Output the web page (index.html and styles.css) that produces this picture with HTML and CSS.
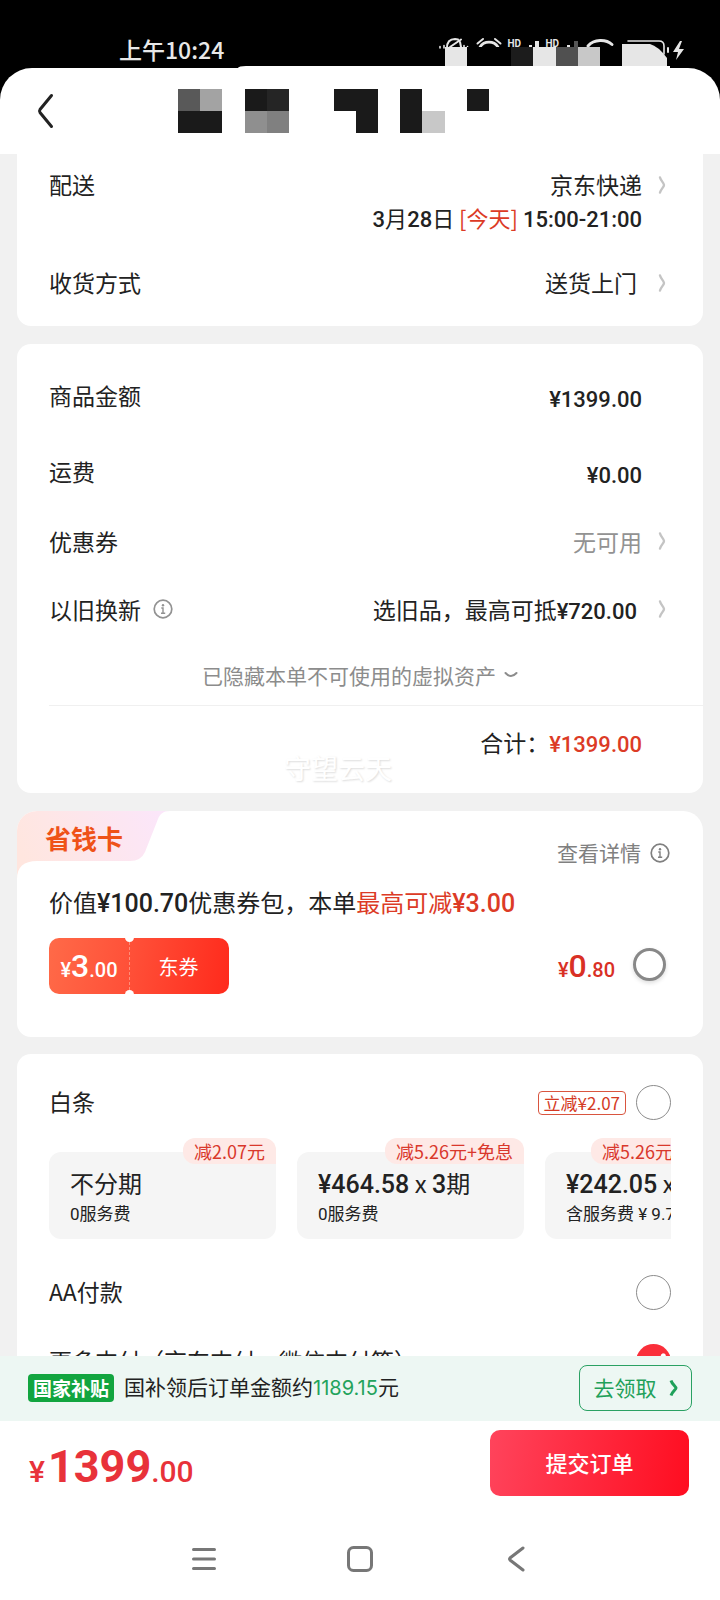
FILE: index.html
```html
<!DOCTYPE html>
<html lang="zh-CN">
<head>
<meta charset="utf-8">
<meta name="viewport" content="width=device-width, initial-scale=1">
<title>确认订单</title>
<link rel="stylesheet" href="styles.css">
</head>
<body>
<svg class="defs" aria-hidden="true">
  <symbol id="chev" viewBox="0 0 8 18"><path d="M2 1.500C3 5 6 7 6 9S3 13 2 16.500" fill="none" stroke="currentColor" stroke-width="2.400" stroke-linecap="round"/></symbol>
  <symbol id="info" viewBox="0 0 20 20"><circle cx="10" cy="10" r="8.800" fill="none" stroke="currentColor" stroke-width="1.700"/><circle cx="10" cy="6.200" r="1.200" fill="currentColor"/><path d="M8.300 9H10V14M8 14.200H12.200" fill="none" stroke="currentColor" stroke-width="1.400"/></symbol>
</svg>
<div class="app">
  <div class="status">
    <span class="time">上午10:24</span>
    <svg class="status-icons" width="255" height="32" viewBox="437 36 255 32" aria-hidden="true">
      <g fill="none" stroke="#e6e6e6" stroke-width="2" stroke-linecap="round">
        <path d="M447 48C447 41 451 39 455 39L458 39.500M450 47L461 39.500M460 42L461 47"/>
        <path d="M440 46.500V48M444 45.500V48M464 45.500V48M467.500 46.500V48" stroke-width="1.600"/>
        <path d="M477.500 43.500L483 39M495 39L500.500 43.500"/>
        <path d="M480 47C484 40.500 494 40.500 498 47" stroke-width="2.600"/>
        <path d="M588 46C594 39 606 39 612 44.500" stroke-width="3"/>
        <path d="M628 41H659Q664 41 664 46V54" stroke-width="1.600"/>
        <path d="M668 48V52"/>
      </g>
      <g fill="#e6e6e6">
        <path d="M529 45H532V48H529ZM535 41H539V48H535ZM567 45H570V48H567ZM680 41L673 52H678L676 60L684 49H679L682 41Z"/>
        <path d="M574 41H578V48H574Z" fill="#555"/>
        <text class="hd" x="507.500" y="47">HD</text>
        <text class="hd" x="545.500" y="47">HD</text>
        <path d="M445 47H467V68H445Z"/>
        <path d="M533 47H556V68H533Z"/>
        <path d="M622 44H650Q658 46 667 58V68H622Z"/>
      </g>
      <path d="M467 47H511V68H467Z" fill="#000"/>
      <path d="M511 47H533V68H511Z" fill="#1c1c1c"/>
      <path d="M556 47H578V68H556Z" fill="#505050"/>
      <path d="M578 47H600V68H578Z" fill="#c8c8c8"/>
      <path d="M600 47H622V68H600Z" fill="#000"/>
    </svg>
  </div>

  <div class="sheet">
    <header class="head">
      <button class="back" type="button" aria-label="返回"><svg width="18" height="36" viewBox="0 0 18 36"><path d="M14.500 2.500L3 16.500Q2 18 3 19.500L14.500 33.500" fill="none" stroke="#222" stroke-width="3" stroke-linecap="round"/></svg></button>
      <svg class="mosaic" width="311" height="44" viewBox="178 89 311 44" shape-rendering="crispEdges" aria-hidden="true">
        <path d="M178 111H222V133H178ZM245 89H289V111H245ZM334 89H378V133H356V111H334ZM400 89H422V133H400ZM467 89H489V111H467Z" fill="#1a1a1a"/>
        <path d="M178 89H200V111H178Z" fill="#595959"/>
        <path d="M200 89H222V111H200Z" fill="#a3a3a3"/>
        <path d="M267 89H289V111H267Z" fill="#252525"/>
        <path d="M245 111H267V133H245Z" fill="#8f8f8f"/>
        <path d="M267 111H289V133H267Z" fill="#808080"/>
        <path d="M422 111H445V133H422Z" fill="#c8c8c8"/>
      </svg>
    </header>

    <main class="content">
      <section class="card delivery">
        <div class="row row-top">
          <span>配送</span>
          <div class="value"><div>京东快递</div><div class="date"><b>3</b>月<b>28</b>日 <span class="red">[今天]</span> <b>15:00-21:00</b></div></div>
          <svg class="chev" width="8" height="18"><use href="#chev"/></svg>
        </div>
        <div class="row row-top">
          <span>收货方式</span>
          <div class="value inset">送货上门</div>
          <svg class="chev" width="8" height="18"><use href="#chev"/></svg>
        </div>
      </section>

      <section class="card amounts">
        <div class="row row-tall"><span>商品金额</span><span class="value"><b>¥1399.00</b></span><span class="chev"></span></div>
        <div class="row row-tall"><span>运费</span><span class="value"><b>¥0.00</b></span><span class="chev"></span></div>
        <div class="row row-coupon"><span>优惠券</span><span class="value muted">无可用</span><svg class="chev" width="8" height="18"><use href="#chev"/></svg></div>
        <div class="row row-trade"><span class="with-icon">以旧换新 <svg class="info" width="20" height="20"><use href="#info"/></svg></span><span class="value inset">选旧品，最高可抵<b>¥720.00</b></span><svg class="chev" width="8" height="18"><use href="#chev"/></svg></div>
        <button class="hidden-assets" type="button">已隐藏本单不可使用的虚拟资产 <svg width="14" height="8" viewBox="0 0 14 8"><path d="M1.500 2Q7 8 12.500 2" fill="none" stroke="#8c8c8c" stroke-width="2" stroke-linecap="round"/></svg></button>
        <div class="row total"><span class="value">合计：<b class="red">¥1399.00</b></span><span class="chev"></span></div>
        <span class="watermark">守望云天</span>
      </section>

      <section class="card saver">
        <svg class="saver-bg" width="153" height="68" viewBox="0 0 153 68" aria-hidden="true">
          <defs><linearGradient id="pk" x1="0" y1="0.500" x2="1" y2="0.300"><stop offset="0" stop-color="#ffe6df"/><stop offset="0.500" stop-color="#fde6ec"/><stop offset="1" stop-color="#fbe6fa"/></linearGradient></defs>
          <path d="M0 68V0H153C146 0 143 3 141 8L128 41Q124 50 113 50H20Q0 50 0 68Z" fill="url(#pk)"/>
        </svg>
        <div class="saver-head">
          <h2>省钱卡</h2>
          <a class="detail" href="#detail">查看详情 <svg width="20" height="20"><use href="#info"/></svg></a>
        </div>
        <p class="saver-desc">价值<b>¥100.70</b>优惠券包，本单<span class="red">最高可减<b>¥3.00</b></span></p>
        <div class="saver-buy">
          <div class="ticket"><span class="ticket-amt">¥<b>3</b>.00</span><span class="ticket-name">东券</span></div>
          <label class="saver-pick"><span class="saver-price">¥<b>0</b>.80</span><input class="radio thick" type="checkbox"></label>
        </div>
      </section>

      <section class="card pay">
        <label class="row pay-row"><span class="pay-name">白条</span><span class="off">立减¥2.07</span><input class="radio" type="radio" name="pay"></label>
        <div class="plans">
          <button class="plan" type="button"><span class="plan-tag">减2.07元</span><span class="plan-title">不分期</span><span class="plan-sub">0服务费</span></button>
          <button class="plan" type="button"><span class="plan-tag">减5.26元+免息</span><span class="plan-title"><b>¥464.58</b> x <b>3</b>期</span><span class="plan-sub">0服务费</span></button>
          <button class="plan" type="button"><span class="plan-tag plan-tag-wide">减5.26元</span><span class="plan-title"><b>¥242.05</b> x <b>6</b>期</span><span class="plan-sub">含服务费 ¥ 9.72</span></button>
        </div>
        <label class="row pay-row"><span class="pay-name">AA付款</span><input class="radio push" type="radio" name="pay"></label>
        <label class="row pay-row"><span class="pay-name">更多支付（京东支付、微信支付等）</span><input class="radio push" type="radio" name="pay" checked></label>
      </section>
    </main>

    <footer>
      <div class="subsidy">
        <span class="gov">国家补贴</span>
        <span class="gov-text">国补领后订单金额约<span class="gov-num">1189.15</span>元</span>
        <button class="claim" type="button">去领取 <svg width="9" height="18" viewBox="0 0 9 18"><path d="M2 1.500C3 5 7 7.500 7 9S3 13 2 16.500" fill="none" stroke="#1fa15a" stroke-width="3"/></svg></button>
      </div>
      <div class="checkout">
        <span class="sum">¥<b>1399</b>.00</span>
        <button class="submit" type="button">提交订单</button>
      </div>
      <nav class="sysnav" aria-label="系统导航">
        <button type="button" aria-label="菜单"><svg width="26" height="26" viewBox="0 0 26 26"><path d="M2.500 3.500H23.500M2.500 13H23.500M2.500 22.500H23.500"/></svg></button>
        <button type="button" aria-label="主页"><svg width="26" height="26" viewBox="0 0 26 26"><rect x="1.500" y="1.500" width="23" height="23" rx="5"/></svg></button>
        <button type="button" aria-label="后退"><svg width="26" height="26" viewBox="0 0 26 26"><path d="M20 2L7 12Q6 13 7 14L20 24"/></svg></button>
      </nav>
    </footer>
  </div>
</div>
</body>
</html>
```
FILE: styles.css
```css
* { box-sizing: border-box; }

body {
  margin: 0;
  background: #000;
  color: #222;
  font: 400 23px/33px "Noto Sans CJK SC", sans-serif;
}

button {
  margin: 0;
  padding: 0;
  border: 0;
  background: none;
  color: inherit;
  font: inherit;
}

/* Amounts and times */
b {
  font-family: Roboto, sans-serif;
  font-weight: 500;
  line-height: 1;
}

svg { display: block; }
.defs { position: absolute; width: 0; height: 0; }

.app {
  display: flex;
  flex-direction: column;
  height: 100vh;
}

.status {
  display: flex;
  justify-content: space-between;
  height: 68px;
  padding: 33px 28px 0 119px;
  color: #e8e8e8;
}
.time { font-weight: 500; }
.status-icons { margin-top: 3px; }
.hd { font: 700 10px Roboto, sans-serif; }

.sheet {
  position: relative;
  display: flex;
  flex: 1;
  flex-direction: column;
  min-height: 0;
  border-radius: 32px 32px 0 0;
  background: #fff;
}
.sheet::before {
  content: "";
  position: absolute;
  top: -2px;
  left: 33%;
  right: 7%;
  height: 4px;
  border-top-left-radius: 8px 2px;
  background: #fff;
}

.head {
  display: flex;
  align-items: center;
  gap: 123px;
  height: 86px;
  padding-left: 37px;
}

.content {
  display: flex;
  flex: 1;
  flex-direction: column;
  gap: 18px;
  min-height: 0;
  overflow: hidden;
  padding: 0 17px;
  background: #f1f1f1;
}

.card {
  position: relative;
  flex: none;
  padding: 0 32px;
  border-radius: 14px;
  background: #fff;
}

.row {
  display: flex;
  align-items: center;
}
.value {
  margin-left: auto;
  text-align: right;
}
.inset { padding-right: 5px; }
.red { color: #dc3b26; }
.muted { color: #929292; }
.chev {
  flex: none;
  width: 8px;
  margin-left: 16px;
  margin-right: 5px;
  color: #c4c4c4;
}

.delivery {
  display: flex;
  flex-direction: column;
  gap: 32px;
  padding-top: 14px;
  padding-bottom: 27px;
  border-radius: 0 0 14px 14px;
}
.row-top { align-items: flex-start; }
.row-top .chev { margin-top: 8px; }
.date { font-size: 22px; }

.amounts b { font-size: 22px; }
.amounts { padding-top: 13px; padding-bottom: 15px; }
.row-tall { height: 76px; }
.row-tall .value { padding-top: 4px; }
.row-coupon { height: 64px; }
.row-trade { height: 72px; }
.with-icon,
.detail {
  display: flex;
  align-items: center;
  gap: 12px;
}
.info { color: #929292; }
.hidden-assets {
  display: flex;
  align-items: center;
  justify-content: center;
  gap: 8px;
  width: 100%;
  height: 60px;
  color: #8c8c8c;
  font-size: 21px;
}
.total {
  height: 73px;
  margin-right: -32px;
  padding-right: 32px;
  border-top: 1px solid #f0f0f0;
}
.watermark {
  position: absolute;
  right: 311px;
  bottom: 9px;
  color: #fff;
  font-size: 27px;
  text-shadow: 1px 1px 2px #ddd;
}

.saver {
  overflow: hidden;
  padding-bottom: 43px;
  border-radius: 20px 20px 14px 14px;
}
.saver-bg {
  position: absolute;
  top: 0;
  left: 0;
}
.saver-head {
  position: relative;
  display: flex;
  justify-content: space-between;
  height: 68px;
  margin-left: -4px;
}
h2 {
  margin: 10px 0 0;
  color: #ef5218;
  font-size: 26px;
  font-weight: 700;
  line-height: 33px;
}
.detail {
  gap: 9px;
  height: 33px;
  margin: 25px 1px 0 0;
  color: #808080;
  font-size: 21px;
  text-decoration: none;
}
.saver-desc {
  margin: 0;
  font-size: 24px;
  line-height: 46px;
}
.saver-desc b { font-size: 25px; }
.saver-buy {
  display: flex;
  align-items: center;
  justify-content: space-between;
  margin-top: 13px;
}
.ticket {
  position: relative;
  display: flex;
  align-items: center;
  width: 180px;
  height: 56px;
  border-radius: 10px;
  background: linear-gradient(100deg, #ff6a48, #ff5038 45%, #ff2a1c);
  color: #fff;
}
.ticket::before,
.ticket::after {
  content: "";
  position: absolute;
  left: 76px;
  width: 9px;
  height: 9px;
  border-radius: 50%;
  background: #fff;
}
.ticket::before { top: -5px; }
.ticket::after { bottom: -5px; }
.ticket-amt {
  width: 81px;
  border-right: 1px dashed #ff8d78;
  text-align: center;
}
.ticket-amt,
.saver-price {
  padding-top: 8px;
  font-family: Roboto, sans-serif;
  font-size: 20px;
  font-weight: 500;
  line-height: 40px;
}
.ticket-amt b,
.saver-price b { font-size: 32px; }
.ticket-name {
  flex: 1;
  padding-right: 2px;
  font-size: 20px;
  text-align: center;
}
.saver-pick {
  display: flex;
  align-items: center;
  gap: 18px;
  padding-right: 5px;
  color: #d93025;
}

.radio {
  flex: none;
  appearance: none;
  width: 35px;
  height: 35px;
  margin: 0;
  border: 1px solid #8c8c8c;
  border-radius: 50%;
  background: #fff;
}
.radio:checked { border: 0; background: radial-gradient(circle at 78% 34%, #fff 0 2px, #fa2f3a 3px); }
.thick {
  width: 33px;
  height: 33px;
  margin-bottom: 4px;
  border: 3px solid #888;
  box-shadow: 0 2px 4px #ddd;
}
.push { margin-left: auto; }

.pay { margin-top: -1px; padding-top: 14px; }
.pay-row { height: 69px; }
.pay-name { padding-bottom: 2px; }
.off {
  margin: 0 10px 0 auto;
  padding: 0 5px;
  border: 1px solid #d9553f;
  border-radius: 4px;
  color: #d43a24;
  font-size: 17px;
  line-height: 22px;
}
.plans {
  display: flex;
  gap: 21px;
  overflow: hidden;
  margin-bottom: 19px;
  padding-top: 15px;
}
.plan {
  position: relative;
  display: flex;
  flex: none;
  flex-direction: column;
  width: 227px;
  height: 87px;
  padding: 14px 21px 0;
  border-radius: 12px;
  background: #f5f5f5;
  text-align: left;
  white-space: nowrap;
}
.plan-tag {
  position: absolute;
  top: -14px;
  right: 0;
  padding: 0 11px;
  border-radius: 12px 12px 0 12px;
  background: #fee9e6;
  color: #d9382c;
  font-size: 18px;
  line-height: 26px;
}
.plan-tag-wide { width: 181px; }
.plan-title { font-size: 24px; line-height: 34px; }
.plan-title b { font-size: 25px; }
.plan-sub {
  font-family: Roboto, "Noto Sans CJK SC", sans-serif;
  font-size: 17px;
  line-height: 28px;
}

footer { background: #fff; }
.subsidy {
  display: flex;
  align-items: center;
  height: 65px;
  padding: 0 28px 2px;
  background: #edf7f3;
}
.gov {
  padding: 0 5px;
  border-radius: 4px;
  background: #12a53f;
  color: #fff;
  font-size: 19px;
  font-weight: 700;
  line-height: 28px;
}
.gov-text { margin-left: 10px; font-size: 21px; }
.gov-num { color: #23a35c; font-family: Inter, sans-serif; font-size: 20px; }
.claim {
  display: flex;
  align-items: center;
  justify-content: center;
  gap: 12px;
  width: 113px;
  height: 46px;
  margin-left: auto;
  border: 1px solid #2aa163;
  border-radius: 8px;
  color: #1fa15a;
  font-size: 21px;
}
.checkout {
  display: flex;
  align-items: flex-start;
  justify-content: space-between;
  height: 97px;
  padding: 9px 31px 0 29px;
}
.sum {
  padding-top: 6px;
  color: #e8323a;
  font: 500 30px/72px Roboto, sans-serif;
}
.sum b { margin-left: 3px; font-size: 45px; font-weight: 700; }
.submit {
  width: 199px;
  height: 66px;
  padding-bottom: 2px;
  border-radius: 10px;
  background: linear-gradient(100deg, #ff445c, #ff0d20);
  color: #fff;
  font-size: 22px;
  font-weight: 500;
}
.sysnav {
  display: flex;
  align-items: center;
  justify-content: center;
  gap: 130px;
  height: 82px;
}
.sysnav svg {
  fill: none;
  stroke: #777;
  stroke-width: 3;
  stroke-linecap: round;
}
```
